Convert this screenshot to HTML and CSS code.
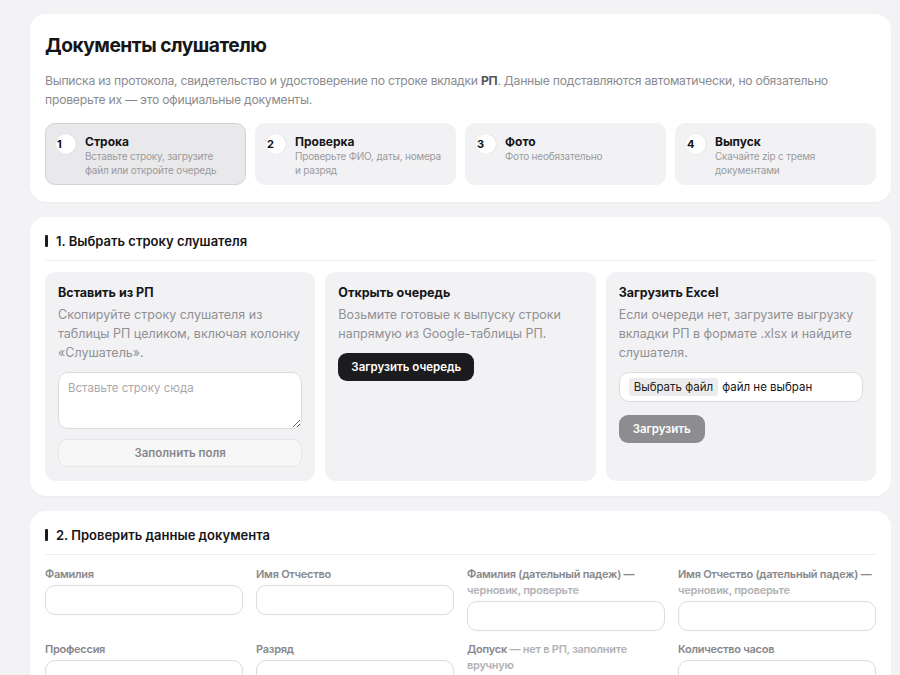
FILE: index.html
```html
<!DOCTYPE html>
<html lang="ru">
<head>
<meta charset="utf-8">
<title>Документы слушателю</title>
<link rel="stylesheet" href="styles.css">
</head>
<body>
<main class="page">
  <section class="card intro">
    <h1 class="title">Документы слушателю</h1>
    <p class="lead">Выписка из протокола, свидетельство и удостоверение по строке вкладки <b>РП</b>. Данные подставляются автоматически, но обязательно проверьте их — это официальные документы.</p>
    <ol class="steps">
      <li class="step active"><span class="num">1</span><div class="step-text"><div class="step-title">Строка</div><div class="step-desc">Вставьте строку, загрузите файл или откройте очередь</div></div></li>
      <li class="step"><span class="num">2</span><div class="step-text"><div class="step-title">Проверка</div><div class="step-desc">Проверьте ФИО, даты, номера и разряд</div></div></li>
      <li class="step"><span class="num">3</span><div class="step-text"><div class="step-title">Фото</div><div class="step-desc">Фото необязательно</div></div></li>
      <li class="step"><span class="num">4</span><div class="step-text"><div class="step-title">Выпуск</div><div class="step-desc">Скачайте zip с тремя документами</div></div></li>
    </ol>
  </section>

  <section class="card">
    <h2 class="sec-title">1. Выбрать строку слушателя</h2>
    <div class="sources">
      <div class="source">
        <h3 class="src-title">Вставить из РП</h3>
        <p class="src-desc">Скопируйте строку слушателя из таблицы РП целиком, включая колонку «Слушатель».</p>
        <textarea class="paste" placeholder="Вставьте строку сюда"></textarea>
        <button class="btn btn-light" type="button">Заполнить поля</button>
      </div>
      <div class="source">
        <h3 class="src-title">Открыть очередь</h3>
        <p class="src-desc">Возьмите готовые к выпуску строки напрямую из Google-таблицы РП.</p>
        <div><button class="btn btn-dark" type="button">Загрузить очередь</button></div>
      </div>
      <div class="source">
        <h3 class="src-title">Загрузить Excel</h3>
        <p class="src-desc">Если очереди нет, загрузите выгрузку вкладки РП в формате .xlsx и найдите слушателя.</p>
        <div class="file"><span class="file-btn">Выбрать файл</span><span class="file-name">файл не выбран</span></div>
        <div><button class="btn btn-grey" type="button">Загрузить</button></div>
      </div>
    </div>
  </section>

  <section class="card">
    <h2 class="sec-title">2. Проверить данные документа</h2>
    <div class="form">
      <label class="field"><span class="label">Фамилия</span><input class="input" type="text"></label>
      <label class="field"><span class="label">Имя Отчество</span><input class="input" type="text"></label>
      <label class="field"><span class="label">Фамилия (дательный падеж) — <span class="hint">черновик, проверьте</span></span><input class="input" type="text"></label>
      <label class="field"><span class="label">Имя Отчество (дательный падеж) — <span class="hint">черновик, проверьте</span></span><input class="input" type="text"></label>
      <label class="field"><span class="label">Профессия</span><input class="input" type="text"></label>
      <label class="field"><span class="label">Разряд</span><input class="input" type="text"></label>
      <label class="field"><span class="label">Допуск <span class="hint">— нет в РП, заполните вручную</span></span><input class="input" type="text"></label>
      <label class="field"><span class="label">Количество часов</span><input class="input" type="text"></label>
    </div>
  </section>
</main>
</body>
</html>
```

FILE: styles.css
```css
* { box-sizing: border-box; }

html, body {
  margin: 0;
  background: #f3f3f5;
}

body {
  font-family: Inter, "Noto Sans", "Liberation Sans", sans-serif;
  color: #1c1c1e;
}

.page {
  padding: 14px 9px 20px 30px;
  display: flex;
  flex-direction: column;
  gap: 15px;
}

.card {
  background: #fff;
  border-radius: 16px;
  padding: 16px 15px 15px;
  box-shadow: 0 1px 2px rgba(0,0,0,0.03);
}

.intro { padding-top: 19px; padding-bottom: 17px; }

.title {
  margin: 0;
  font-size: 19.2px;
  line-height: 24px;
  font-weight: 700;
  letter-spacing: -0.5px;
  color: #161618;
}

.lead {
  margin: 14px 0 0;
  font-size: 12.2px;
  line-height: 19px;
  letter-spacing: -0.25px;
  color: #8b8b8f;
}
.lead b { color: #55555a; font-weight: 700; }

.steps {
  list-style: none;
  margin: 14px 0 0;
  padding: 0;
  display: grid;
  grid-template-columns: repeat(4, minmax(0, 1fr));
  gap: 9px;
}

.step {
  display: flex;
  gap: 9px;
  align-items: flex-start;
  height: 62px;
  padding: 10px 10px 0;
  background: #f2f2f4;
  border: 1px solid #f2f2f4;
  border-radius: 10px;
}
.step.active {
  background: #e9e9eb;
  border-color: #d2d2d5;
}

.num {
  flex: none;
  width: 20px;
  height: 20px;
  border-radius: 50%;
  background: #fff;
  font-size: 11px;
  font-weight: 700;
  line-height: 20px;
  padding-left: 1px;
  color: #111;
  box-shadow: 0.5px 0 1px rgba(0,0,0,0.12);
}

.step-text { padding-top: 1px; }

.step-title {
  font-size: 12px;
  line-height: 14px;
  font-weight: 700;
  color: #161618;
}
.step-desc {
  margin-top: 1px;
  font-size: 10px;
  line-height: 13.5px;
  letter-spacing: -0.2px;
  color: #9a9a9e;
}

.sec-title {
  margin: 0;
  display: flex;
  align-items: center;
  gap: 8px;
  font-size: 13px;
  line-height: 16px;
  font-weight: 600;
  color: #161618;
  padding: 0 0 11px;
  border-bottom: 1px solid #efeff1;
}
.sec-title::before {
  content: "";
  width: 3px;
  height: 12px;
  border-radius: 1px;
  background: #1c1c1e;
}

.sources {
  margin-top: 11px;
  display: grid;
  grid-template-columns: repeat(3, minmax(0, 1fr));
  gap: 10px;
}

.source {
  background: #f2f2f4;
  border-radius: 10px;
  padding: 13px;
  display: flex;
  flex-direction: column;
  min-height: 209px;
}

.src-title {
  margin: 0;
  font-size: 12.5px;
  line-height: 16px;
  font-weight: 700;
  color: #161618;
}
.src-desc {
  margin: 4px 0 0;
  font-size: 12.5px;
  line-height: 19px;
  color: #909094;
}

.paste {
  margin-top: 10px;
  height: 57px;
  resize: vertical;
  border: 1px solid #dcdcdf;
  border-radius: 10px;
  background: #fff;
  padding: 8px 9px;
  font-family: inherit;
  font-size: 11.5px;
  color: #333;
}
.paste::placeholder { color: #a8a8ac; }

.btn {
  font-family: inherit;
  font-size: 11.5px;
  font-weight: 600;
  height: 28px;
  border-radius: 9px;
  padding: 0 13px;
  border: 0;
}
.btn-light {
  margin-top: 10px;
  width: 100%;
  background: #f7f7f8;
  border: 1px solid #e6e6e8;
  color: #88888c;
}
.btn-dark {
  margin-top: 10px;
  background: #1c1c1e;
  color: #fff;
}
.btn-grey {
  margin-top: 13px;
  background: #8d8d90;
  color: #fff;
  padding: 0 14px;
}

.file {
  margin-top: 10px;
  height: 30px;
  display: flex;
  align-items: center;
  gap: 4px;
  background: #fff;
  border: 1px solid #dcdcdf;
  border-radius: 10px;
  padding: 0 9px;
  font-size: 11.5px;
  color: #161618;
}
.file-btn {
  background: #ececee;
  border-radius: 3px;
  padding: 2px 5px;
  color: #222;
}

.form {
  margin-top: 11px;
  display: grid;
  grid-template-columns: repeat(4, minmax(0, 1fr));
  column-gap: 13px;
  row-gap: 10px;
}
.field {
  display: flex;
  flex-direction: column;
  min-width: 0;
}
.label {
  font-size: 11px;
  line-height: 16px;
  font-weight: 600;
  letter-spacing: -0.25px;
  color: #88888c;
}
.hint { color: #b2b2b6; font-weight: 600; }
.input {
  margin-top: 3px;
  width: 100%;
  height: 30px;
  border: 1px solid #dcdcdf;
  border-radius: 10px;
  background: #fff;
  font-family: inherit;
}
```
